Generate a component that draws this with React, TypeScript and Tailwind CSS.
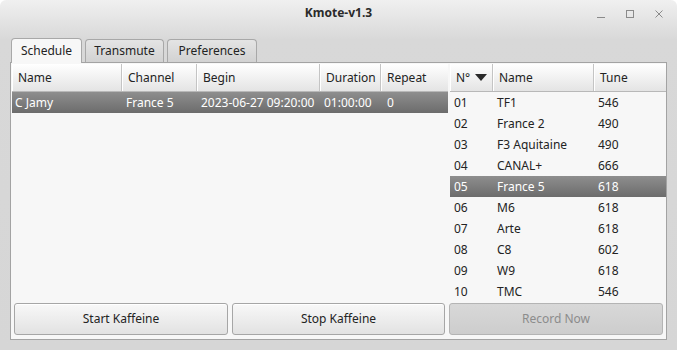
import React from "react";

type Channel = { num: string; name: string; tune: string; selected?: boolean };

const channels: Channel[] = [
  { num: "01", name: "TF1", tune: "546" },
  { num: "02", name: "France 2", tune: "490" },
  { num: "03", name: "F3 Aquitaine", tune: "490" },
  { num: "04", name: "CANAL+", tune: "666" },
  { num: "05", name: "France 5", tune: "618", selected: true },
  { num: "06", name: "M6", tune: "618" },
  { num: "07", name: "Arte", tune: "618" },
  { num: "08", name: "C8", tune: "602" },
  { num: "09", name: "W9", tune: "618" },
  { num: "10", name: "TMC", tune: "546" },
];

const headerCell =
  "h-full flex items-center pl-[6px] border-r border-[#c4c4c4] shadow-[inset_1px_0_0_#ffffff]";

function WindowControls() {
  return (
    <div className="absolute right-[14px] top-[10px] flex items-start gap-[21px]">
      <svg width="8" height="8" viewBox="0 0 8 8">
        <line x1="0" y1="7.5" x2="8" y2="7.5" stroke="#8a8a8a" strokeWidth="1" />
      </svg>
      <svg width="8" height="8" viewBox="0 0 8 8">
        <rect x="0.5" y="0.5" width="7" height="7" fill="none" stroke="#8a8a8a" strokeWidth="1" />
      </svg>
      <svg width="8" height="8" viewBox="0 0 8 8">
        <path d="M0.5 0.5 L7.5 7.5 M7.5 0.5 L0.5 7.5" stroke="#8a8a8a" strokeWidth="1" />
      </svg>
    </div>
  );
}

export default function App() {
  return (
    <div
      className="w-[677px] h-[350px] overflow-hidden bg-[linear-gradient(#f0f0f0,#d8d8d8_40px,#d6d6d6)] text-[12px] text-[#232323] rounded-t-[6px] flex flex-col"
      style={{ fontFamily: '"Noto Sans", "Open Sans", sans-serif' }}
    >
      {/* title bar */}
      <div className="relative h-[38px] shrink-0">
        <div className="absolute left-0 right-0 top-[4px] text-center font-bold text-[12px] text-[#2a2a2a] leading-[18px]">
          Kmote-v1.3
        </div>
        <WindowControls />
      </div>

      {/* tabs */}
      <div className="flex items-end h-[24px] pl-[11px] gap-[3px] relative z-10">
        <div className="h-[25px] w-[71px] flex items-center justify-center bg-[#f7f7f7] border border-b-0 border-[#a8a8a8] rounded-t-[4px] mb-[-1px]">
          Schedule
        </div>
        <div className="h-[23px] w-[79px] flex items-center justify-center bg-[linear-gradient(#e4e4e4,#d2d2d2)] border border-b-0 border-[#a8a8a8] rounded-t-[4px]">
          Transmute
        </div>
        <div className="h-[23px] w-[90px] flex items-center justify-center bg-[linear-gradient(#e4e4e4,#d2d2d2)] border border-b-0 border-[#a8a8a8] rounded-t-[4px]">
          Preferences
        </div>
      </div>

      {/* pane */}
      <div className="ml-[10px] w-[657px] h-[278px] border border-[#a3a3a3] bg-[#f7f7f7] flex flex-col">
        <div className="flex h-[239px] pt-[1px] pl-[1px] gap-[2px] overflow-hidden">
          {/* schedule table */}
          <div className="w-[436px] flex flex-col">
            <div className="h-[28px] shrink-0 flex bg-[linear-gradient(#ffffff,#e4e4e4)] border-b border-[#b8b8b8]">
              <div className={`${headerCell} w-[110px]`}>Name</div>
              <div className={`${headerCell} w-[75px]`}>Channel</div>
              <div className={`${headerCell} w-[123px]`}>Begin</div>
              <div className={`${headerCell} w-[61px]`}>Duration</div>
              <div className={`${headerCell} flex-1 border-r-0`}>Repeat</div>
            </div>
            <div className="h-[21px] flex items-center text-white bg-[linear-gradient(#8e8e8e,#6c6c6c)]">
              <div className="w-[110px] pl-[3px]">C Jamy</div>
              <div className="w-[75px] pl-[4px]">France 5</div>
              <div className="w-[123px] pl-[4px]">2023-06-27 09:20:00</div>
              <div className="w-[61px] pl-[4px]">01:00:00</div>
              <div className="flex-1 pl-[6px]">0</div>
            </div>
          </div>

          {/* channel table */}
          <div className="w-[216px] flex flex-col">
            <div className="h-[28px] shrink-0 flex bg-[linear-gradient(#ffffff,#e4e4e4)] border-b border-[#b8b8b8]">
              <div className={`${headerCell} w-[43px] gap-[5px]`}>
                <span>N°</span>
                <svg width="12" height="7" viewBox="0 0 12 7">
                  <path d="M0 0 L12 0 L6 7 Z" fill="#2a2a2a" />
                </svg>
              </div>
              <div className={`${headerCell} w-[101px]`}>Name</div>
              <div className={`${headerCell} flex-1 border-r-0`}>Tune</div>
            </div>
            {channels.map((c) => (
              <div
                key={c.num}
                className={
                  c.selected
                    ? "h-[21px] shrink-0 flex items-center text-white bg-[linear-gradient(#8e8e8e,#6c6c6c)]"
                    : "h-[21px] shrink-0 flex items-center"
                }
              >
                <div className="w-[43px] pl-[4px]">{c.num}</div>
                <div className="w-[101px] pl-[4px]">{c.name}</div>
                <div className="flex-1 pl-[4px]">{c.tune}</div>
              </div>
            ))}
          </div>
        </div>

        {/* buttons */}
        <div className="flex gap-[4px] px-[3px] pt-[1px]">
          <button className="w-[215px] h-[32px] rounded-[3px] border border-[#a6a6a6] bg-[linear-gradient(#f8f8f8,#e2e2e2)] shadow-[inset_0_1px_0_#ffffff]">
            Start Kaffeine
          </button>
          <button className="w-[214px] h-[32px] rounded-[3px] border border-[#a6a6a6] bg-[linear-gradient(#f8f8f8,#e2e2e2)] shadow-[inset_0_1px_0_#ffffff]">
            Stop Kaffeine
          </button>
          <button
            disabled
            className="w-[215px] h-[32px] rounded-[3px] border border-[#b4b4b4] bg-[linear-gradient(#d8d8d8,#cdcdcd)] text-[#8c8c8c]"
          >
            Record Now
          </button>
        </div>
      </div>
    </div>
  );
}
